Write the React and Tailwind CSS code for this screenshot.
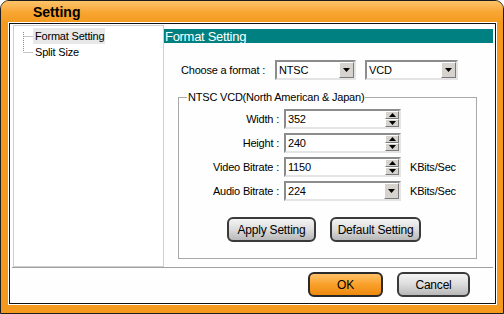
import React from 'react';

const font = { fontFamily: '"Liberation Sans", Arial, sans-serif' };

const Tri = ({ down }) => (
  <svg width="7" height="4" viewBox="0 0 7 4">
    <path d={down ? 'M0 0h7L3.5 4z' : 'M0 4h7L3.5 0z'} fill="#000" />
  </svg>
);

const sunken = 'border-2 border-t-[#8c8c8c] border-l-[#8c8c8c] border-b-[#e4e4e4] border-r-[#e4e4e4] bg-white';
const raised = 'bg-[#d6d3ce] border border-t-white border-l-white border-b-[#7a7a7a] border-r-[#7a7a7a]';

const Select = ({ value, w }) => (
  <div className={`${sunken} ${w} h-[20px] flex items-center`}>
    <span className="flex-1 pl-[2px] leading-none">{value}</span>
    <div className={`${raised} w-[15px] h-[16px] flex items-center justify-center`}>
      <Tri down />
    </div>
  </div>
);

const Spinner = ({ value }) => (
  <div className={`${sunken} w-[117px] h-[20px] flex items-center`}>
    <span className="flex-1 pl-[2px] leading-none">{value}</span>
    <div className="w-[14px] h-[16px] flex flex-col">
      <div className={`${raised} flex-1 flex items-center justify-center`}><Tri /></div>
      <div className={`${raised} flex-1 flex items-center justify-center`}><Tri down /></div>
    </div>
  </div>
);

const Row = ({ label, children, unit }) => (
  <div className="flex items-center h-[20px]">
    <span className="w-[105px] text-right pr-[5px]">{label}</span>
    {children}
    {unit && <span className="ml-[9px]">{unit}</span>}
  </div>
);

const GrayBtn = ({ children, w }) => (
  <button className={`${w} h-[25px] rounded-[6px] border-2 border-[#3a3a3a] bg-gradient-to-b from-[#f4f4f4] via-[#dcdcdc] to-[#b8b8b8] text-[12px] text-black`}>
    {children}
  </button>
);

export default function App() {
  return (
    <div style={font} className="w-[504px] h-[314px] overflow-hidden">
      <div className="w-[504px] h-[314px] border border-[#1c1c1c] rounded-t-[9px] bg-[#f39a1e] flex flex-col text-[11px] tracking-[-0.2px] text-black">
        {/* title bar */}
        <div className="h-[22px] shrink-0 rounded-t-[8px] bg-gradient-to-b from-[#fdc469] via-[#f8a632] to-[#f39a1e] pl-[32px] flex items-center">
          <span className="text-[14px] font-bold tracking-normal">Setting</span>
        </div>

        <div className="flex-1 pl-[8px] pr-[7px] pb-[9px] flex">
          <div className="flex-1 border border-[#111] ring-1 ring-white bg-[#fdfefd] flex flex-col">
            {/* content */}
            <div className="h-[243px] flex pt-[1px] pl-[3px]">
              {/* tree */}
              <div className="relative w-[151px] h-[242px] border border-[#cfcfcf] bg-white pt-[2px]">
                <svg className="absolute left-[9px] top-[6px]" width="12" height="22" viewBox="0 0 12 22">
                  <path d="M0.5 0v20M0.5 4.5h10M0.5 20.5h10" stroke="#8a8a8a" strokeDasharray="1 1" fill="none" />
                </svg>
                <div className="ml-[19px] w-[72px] h-[16px] bg-[#e8e8e8] flex items-center pl-[2px]">Format Setting</div>
                <div className="ml-[19px] h-[16px] flex items-center pl-[2px]">Split Size</div>
              </div>

              {/* right */}
              <div className="flex-1 pt-[4px] pr-[2px]">
                <div className="h-[14px] bg-[#008080] text-white text-[13px] leading-none flex items-center pl-[1px] tracking-[-0.3px]">
                  Format Setting
                </div>

                <div className="mt-[17px] pl-[17px] flex items-center h-[20px]">
                  <span className="w-[94px]">Choose a format :</span>
                  <Select value="NTSC" w="w-[81px]" />
                  <div className="w-[9px]" />
                  <Select value="VCD" w="w-[93px]" />
                </div>

                <fieldset className="mt-[11px] ml-[14px] w-[299px] h-[168px] border border-[#a8a8a8] px-0">
                  <legend className="ml-[8px] px-[1px] leading-[13px]">NTSC VCD(North American &amp; Japan)</legend>
                  <div className="pt-[5px] flex flex-col gap-[4px]">
                    <Row label="Width :"><Spinner value="352" /></Row>
                    <Row label="Height :"><Spinner value="240" /></Row>
                    <Row label="Video Bitrate :" unit="KBits/Sec"><Spinner value="1150" /></Row>
                    <Row label="Audio Bitrate :" unit="KBits/Sec"><Select value="224" w="w-[117px]" /></Row>
                  </div>
                  <div className="mt-[16px] pl-[48px] flex gap-[14px]">
                    <GrayBtn w="w-[89px]">Apply Setting</GrayBtn>
                    <GrayBtn w="w-[91px]">Default Setting</GrayBtn>
                  </div>
                </fieldset>
              </div>
            </div>

            {/* separator */}
            <div className="mx-[2px] border-t border-t-[#a0a0a0] border-b border-b-white" />

            {/* footer */}
            <div className="flex-1 flex justify-end items-start pt-[3px] pr-[25px] gap-[14px]">
              <button className="w-[75px] h-[25px] rounded-[6px] border-2 border-[#2a2a2a] bg-gradient-to-b from-[#ffc163] via-[#f9a029] to-[#ee8a0c] text-[12px]">
                OK
              </button>
              <GrayBtn w="w-[73px]">Cancel</GrayBtn>
            </div>
          </div>
        </div>
      </div>
    </div>
  );
}
